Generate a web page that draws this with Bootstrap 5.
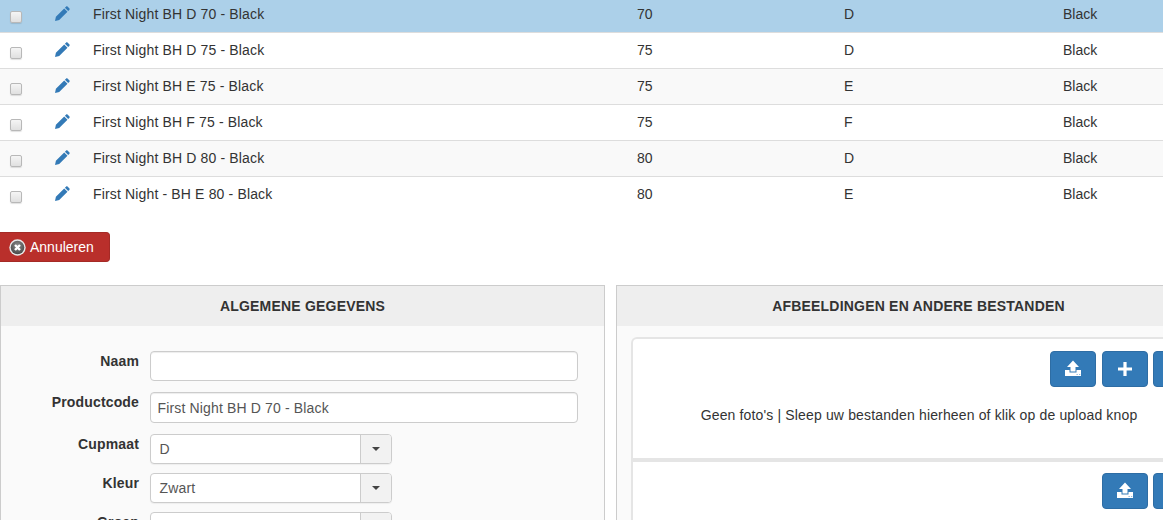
<!DOCTYPE html>
<html lang="nl"><head><meta charset="utf-8"><title>Product</title>
<link rel="stylesheet" href="https://cdn.jsdelivr.net/npm/bootstrap@5.3.0/dist/css/bootstrap.min.css">
<style>
html,body{height:520px;overflow:hidden;background:#fff}
body{font-family:"Liberation Sans",Arial,sans-serif;font-size:14px;color:#333;line-height:20px}
.sheet{width:1163px}
.vtable{--bs-table-color:#333;--bs-table-striped-color:#333;--bs-table-striped-bg:#f9f9f9;--bs-table-border-color:#ddd;table-layout:fixed;width:1163px;margin:-4px 0 0;letter-spacing:.15px}
.vtable>tbody>tr>td{height:36px;padding:0;vertical-align:middle}
.vtable>tbody>tr.on>td{--bs-table-bg:#acd0e9;--bs-table-accent-bg:#acd0e9;--bs-table-color:#333}
.vtable>tbody>tr:last-child>td{border-bottom:0;height:36px}
.vtable .num{letter-spacing:0}
.ccell{display:flex;align-items:center;padding-left:10px;gap:33px}
.fakecheck{width:12px;height:12px;border:1px solid #b8b8b8;border-radius:2px;background:linear-gradient(#f5f5f5,#e0e0e0);box-shadow:0 1px 1px rgba(0,0,0,.12);margin-top:6px;flex:none}
.pen{width:15px;height:15px;flex:none;margin-top:-1px}
.cancelbtn{display:inline-flex;align-items:center;gap:4px;--bs-btn-bg:#b92f2b;--bs-btn-border-color:#a52a26;--bs-btn-color:#fff;border-left:0;border-radius:0 4px 4px 0;height:30px;padding:0 12px 0 9px;margin-top:20px;margin-bottom:23px;width:110px;font-size:14px;line-height:20px}
.panes{display:grid;grid-template-columns:605px 605px;column-gap:11px;width:1221px}
.pane{background:#fafafa;border:1px solid #ccc;border-bottom:0;height:240px;overflow:hidden}
.panehead{background:#eee;height:40px;font-weight:700;font-size:14px;letter-spacing:.2px;color:#333;text-align:center;line-height:40px}
.formbox{padding:25px 26px 0 0}
.frow{display:flex;margin-bottom:11px}
.frow.sel{margin-bottom:9px}
.flabel{width:138px;text-align:right;font-weight:700;flex:none;margin:0 11px 0 0;line-height:20px;letter-spacing:.15px}
.tinput.form-control{width:428px;height:30px;border-color:#ccc;border-radius:4px;padding:5px 6.5px;color:#555;font-size:14px;line-height:20px;letter-spacing:.15px;box-shadow:inset 0 1px 1px rgba(0,0,0,.075)}
.tinput.tall{height:31px}
.selbox{width:242px;height:30px;border:1px solid #ccc;border-radius:4px;background:#fff;display:flex;color:#555;box-shadow:0 1px 1px rgba(0,0,0,.05);line-height:29px;letter-spacing:.15px}
.selbox .v{flex:1;padding-left:8.5px}
.selbox .car{width:31px;background:#f2f2f2;border-left:1px solid #ccc;border-radius:0 3px 3px 0;display:flex;align-items:center;justify-content:center}
.selbox .car::after{content:"";border-top:4px solid #444;border-left:4px solid transparent;border-right:4px solid transparent}
.dropwrap{margin:11px 0 0 14px;width:576px}
.dropzone{background:#fff;border:2px solid #e5e5e5;border-bottom:0;border-radius:6px 6px 0 0;height:121px;padding:12px 6px 0 0}
.dropzone.two{border-top:4px solid #e5e5e5;border-radius:0;height:90px;padding-top:11px}
.btnrow{display:flex;justify-content:flex-end;gap:5px}
.ubtn.btn{--bs-btn-bg:#337ab7;--bs-btn-border-color:#2e6da4;width:46px;height:36px;padding:0;border-radius:4px;display:flex;align-items:center;justify-content:center;flex:none}
.ubtn.first{margin-right:1px}
.ubtn svg{width:18px;height:18px}
.hint{text-align:center;margin:18px 0 0;padding-left:6px;letter-spacing:.15px}
</style></head><body>
<svg width="0" height="0" class="d-block position-absolute"><defs>
<symbol id="pencil" viewBox="0 0 15 15"><path fill="#337ab7" d="M11 .7c.5-.5 1.2-.5 1.7 0l1.6 1.6c.5.5.5 1.2 0 1.7l-1.1 1.1-3.3-3.3zM9.2 2.5l3.3 3.3-8.3 8.3L0 15l.9-4.2z"/></symbol>
<symbol id="upl" viewBox="0 0 18 18"><path fill="#fff" d="M9 .5l6 6.5h-3.5v4.5h-5V7H3zM1 10h4.5v2.5h7V10H17v6H1z"/><path fill="#8fbbe0" d="M12.5 14h1.3v1h-1.3zM15 14h1.3v1H15z"/></symbol>
<symbol id="plu" viewBox="0 0 18 18"><path fill="#fff" d="M7.4 2h3.2v5.4H16v3.2h-5.4V16H7.4v-5.4H2V7.4h5.4z"/></symbol>
</defs></svg>
<div class="sheet">
<table class="table table-striped vtable"><colgroup><col style="width:93px"><col style="width:544px"><col style="width:207px"><col style="width:219px"><col style="width:100px"></colgroup><tbody>
<tr class="on"><td><div class="ccell"><span class="fakecheck"></span><svg class="pen"><use href="#pencil"/></svg></div></td><td>First Night BH D 70 - Black</td><td class="num">70</td><td class="num">D</td><td class="num">Black</td></tr>
<tr><td><div class="ccell"><span class="fakecheck"></span><svg class="pen"><use href="#pencil"/></svg></div></td><td>First Night BH D 75 - Black</td><td class="num">75</td><td class="num">D</td><td class="num">Black</td></tr>
<tr><td><div class="ccell"><span class="fakecheck"></span><svg class="pen"><use href="#pencil"/></svg></div></td><td>First Night BH E 75 - Black</td><td class="num">75</td><td class="num">E</td><td class="num">Black</td></tr>
<tr><td><div class="ccell"><span class="fakecheck"></span><svg class="pen"><use href="#pencil"/></svg></div></td><td>First Night BH F 75 - Black</td><td class="num">75</td><td class="num">F</td><td class="num">Black</td></tr>
<tr><td><div class="ccell"><span class="fakecheck"></span><svg class="pen"><use href="#pencil"/></svg></div></td><td>First Night BH D 80 - Black</td><td class="num">80</td><td class="num">D</td><td class="num">Black</td></tr>
<tr><td><div class="ccell"><span class="fakecheck"></span><svg class="pen"><use href="#pencil"/></svg></div></td><td>First Night - BH E 80 - Black</td><td class="num">80</td><td class="num">E</td><td class="num">Black</td></tr>
</tbody></table>

<button type="button" class="btn cancelbtn"><svg width="17" height="17" viewBox="0 0 17 17"><defs><radialGradient id="g" cx=".5" cy=".35" r=".7"><stop offset="0" stop-color="#8a8a8a"/><stop offset="1" stop-color="#444"/></radialGradient></defs><circle cx="8.5" cy="8.5" r="8.2" fill="#e8e8e8"/><circle cx="8.5" cy="8.5" r="6.8" fill="url(#g)"/><path d="M6 6l5 5M11 6l-5 5" stroke="#fff" stroke-width="2.4"/></svg>Annuleren</button>

<div class="panes">
<section class="pane"><div class="panehead">ALGEMENE GEGEVENS</div>
<div class="formbox">
<div class="frow"><label class="flabel">Naam</label><input class="form-control tinput" type="text"></div>
<div class="frow"><label class="flabel">Productcode</label><input class="form-control tinput tall" type="text" value="First Night BH D 70 - Black"></div>
<div class="frow sel"><label class="flabel">Cupmaat</label><div class="selbox"><span class="v">D</span><span class="car"></span></div></div>
<div class="frow sel"><label class="flabel">Kleur</label><div class="selbox"><span class="v">Zwart</span><span class="car"></span></div></div>
<div class="frow sel"><label class="flabel">Groep</label><div class="selbox"><span class="v"></span><span class="car"></span></div></div>
</div></section>
<section class="pane"><div class="panehead">AFBEELDINGEN EN ANDERE BESTANDEN</div>
<div class="dropwrap">
<div class="dropzone"><div class="btnrow"><button type="button" class="btn ubtn first"><svg><use href="#upl"/></svg></button><button type="button" class="btn ubtn"><svg><use href="#plu"/></svg></button><button type="button" class="btn ubtn"></button></div>
<p class="hint">Geen foto's | Sleep uw bestanden hierheen of klik op de upload knop</p></div>
<div class="dropzone two"><div class="btnrow"><button type="button" class="btn ubtn"><svg><use href="#upl"/></svg></button><button type="button" class="btn ubtn"></button></div></div>
</div></section>
</div>
</div>
</body></html>
